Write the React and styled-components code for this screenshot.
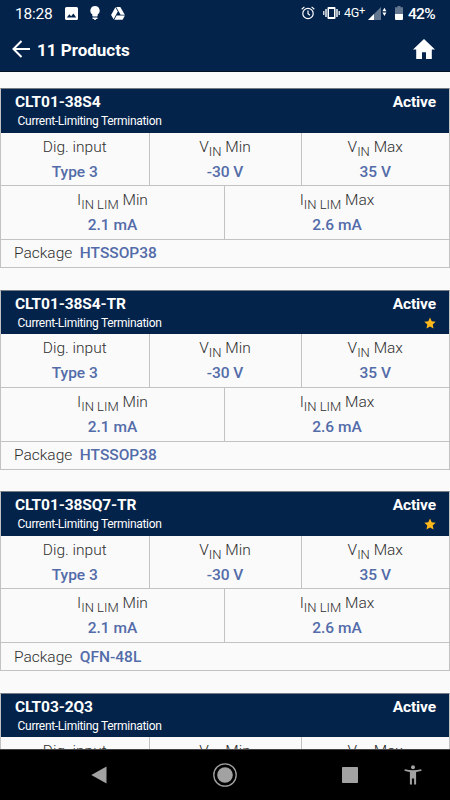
import React from 'react';
import styled, { createGlobalStyle } from 'styled-components';

const colors = {
	navy: '#03234b',
	page: '#fafafa',
	line: '#c2c2c2',
	label: '#2e2e2e',
	value: '#536ca9',
	star: '#ffb81c',
	nav_icon: '#a2a2a2',
};

const products = [
	{ name: 'CLT01-38S4', pkg: 'HTSSOP38', starred: false },
	{ name: 'CLT01-38S4-TR', pkg: 'HTSSOP38', starred: true },
	{ name: 'CLT01-38SQ7-TR', pkg: 'QFN-48L', starred: true },
	{ name: 'CLT03-2Q3', pkg: 'HTSSOP38', starred: false },
];

const StatusIcons = () => (
	<>
		<StatusIcon $left={13} width="13" height="13" viewBox="0 0 13 13">
			<path
				fillRule="evenodd"
				d="M1.5 0h10Q13 0 13 1.5v10q0 1.5-1.5 1.5h-10Q0 13 0 11.5v-10Q0 0 1.5 0ZM1.8 10.5h9.4L8.4 6.4 6.1 9.3 4.4 7.3Z"
			/>
		</StatusIcon>
		<StatusIcon $left={12} width="10" height="14" viewBox="0 0 10 14">
			<path d="M5 0a4.7 4.7 0 0 1 2.7 8.5v1.3q0 .8-.8.8H3.1q-.8 0-.8-.8V8.5A4.7 4.7 0 0 1 5 0ZM2.5 11.6h5v.8q0 .5-.5.5H6l-.4 1H4.4l-.4-1H3q-.5 0-.5-.5Z" />
		</StatusIcon>
		<StatusIcon $left={11} width="14" height="13" viewBox="0 0 14 13">
			<path d="M4.4.3 6.8 4.5 2.6 12.2.1 7.9Z" />
			<path d="M5.2 0h4.1L13.8 7.7H9.6Z" />
			<path d="M5.6 8.6h8.3L11.6 12.8H3.3Z" />
		</StatusIcon>
	</>
);

const ProductCard = ({ product }) => (
	<Card>
		<CardHead>
			<HeadLine>
				<span>{product.name}</span>
				<span>Active</span>
			</HeadLine>
			<HeadSub>
				<span>Current-Limiting Termination</span>
				{product.starred && (
					<svg width="12" height="12" viewBox="0 0 24 24" fill={colors.star}>
						<path d="m12 1 3.4 7.4 8 .9-6 5.5 1.7 8-7.1-4-7.1 4 1.7-8-6-5.5 8-.9Z" />
					</svg>
				)}
			</HeadSub>
		</CardHead>
		<CellRow $columns="147.500px 152px 1fr">
			<Cell>
				<Label>Dig. input</Label>
				<Value>Type 3</Value>
			</Cell>
			<Cell>
				<Label>
					V<Sub>IN</Sub> Min
				</Label>
				<Value>-30 V</Value>
			</Cell>
			<Cell>
				<Label>
					V<Sub>IN</Sub> Max
				</Label>
				<Value>35 V</Value>
			</Cell>
		</CellRow>
		<CellRow $columns="223px 1fr">
			<Cell>
				<Label>
					I<Sub>IN LIM</Sub> Min
				</Label>
				<Value>2.1 mA</Value>
			</Cell>
			<Cell>
				<Label>
					I<Sub>IN LIM</Sub> Max
				</Label>
				<Value>2.6 mA</Value>
			</Cell>
		</CellRow>
		<PackageRow>
			<Label>Package</Label>
			<Value>{product.pkg}</Value>
		</PackageRow>
	</Card>
);

const App = () => (
	<Screen>
		<GlobalStyle />
		<StatusBar>
			<Clock>18:28</Clock>
			<StatusIcons />
			<Spacer />
			<StatusIcon width="14" height="14" viewBox="0 0 14 14">
				<g fill="none" stroke="#fff" strokeWidth="1.2">
					<circle cx="7" cy="7.5" r="5.2" />
					<path d="M7 4.5v3.2L9 9.2M.7 3.2 3.4.9M13.3 3.2 10.6.9" />
				</g>
			</StatusIcon>
			<StatusIcon $left={8} width="17" height="14" viewBox="0 0 17 14">
				<path
					fillRule="evenodd"
					d="M5.5 1h6q1 0 1 1v10q0 1-1 1h-6q-1 0-1-1V2q0-1 1-1ZM6 3v8h5V3ZM2.3 3h1.4v8H2.3ZM13.3 3h1.4v8h-1.4ZM.2 5h1.2v4H.2ZM15.6 5h1.2v4h-1.2Z"
				/>
			</StatusIcon>
			<Network>
				4G<sup>+</sup>
			</Network>
			<StatusIcon $left={3} width="19" height="13" viewBox="0 0 19 13">
				<path opacity=".38" d="M0 13 13 0v13Z" />
				<path d="M0 13 6 7v6Z" />
				<path d="M14.4 4.2 16.4.8l2 3.4ZM14.4 5.6h4l-2 3.4Z" />
			</StatusIcon>
			<StatusIcon $left={8} width="8" height="14" viewBox="0 0 8 14">
				<path opacity=".38" d="M2.5 0h3v1.2H8V8H0V1.2h2.5Z" />
				<path d="M0 8h8v5q0 1-1 1H1q-1 0-1-1Z" />
			</StatusIcon>
			<Battery>42%</Battery>
		</StatusBar>
		<AppBar>
			<svg width="19" height="18" viewBox="0 0 19 18" fill="none" stroke="#fff" strokeWidth="2">
				<path d="M18 9H2M9.5 1 1.5 9l8 8" />
			</svg>
			<Title>11 Products</Title>
			<svg width="22" height="20" viewBox="0 0 22 20" fill="#fff">
				<path d="M11 0 22 10.4h-3.2V20H13v-6.8H9V20H3.2v-9.6H0Z" />
			</svg>
		</AppBar>
		<List>
			{products.map((product) => (
				<ProductCard key={product.name} product={product} />
			))}
		</List>
		<NavBar>
			<NavIcon width="16" height="18" viewBox="0 0 16 18">
				<path d="M15.5.4v17.2L.3 9Z" />
			</NavIcon>
			<NavIcon $left={106} width="24" height="24" viewBox="0 0 24 24">
				<circle cx="12" cy="12" r="11.2" fill="none" stroke={colors.nav_icon} strokeWidth="1.3" />
				<circle cx="12" cy="12" r="7.8" />
			</NavIcon>
			<NavIcon $left={105} width="16" height="16" viewBox="0 0 16 16">
				<rect width="16" height="16" rx=".7" />
			</NavIcon>
			<NavIcon $left={46} width="18" height="20" viewBox="0 0 18 20">
				<circle cx="9" cy="2.2" r="2" />
				<path d="M.8 4.2Q9 6.5 17.2 4.2l.4 1.6q-3 .9-5.500 1.100V19.500h-2v-6H7.900v6h-2V6.900Q3.400 6.700.4 5.800Z" />
			</NavIcon>
		</NavBar>
	</Screen>
);
export default App;

const GlobalStyle = createGlobalStyle`
	* {
		box-sizing: border-box;
	}
	body {
		margin: 0;
		font-family: Roboto, 'Liberation Sans', sans-serif;
	}
	svg {
		flex: none;
		display: block;
	}
`;

const Screen = styled.div`
	display: flex;
	flex-direction: column;
	width: 450px;
	height: 800px;
	overflow: hidden;
	background: ${colors.page};
`;

const StatusBar = styled.div`
	display: flex;
	align-items: center;
	flex: none;
	height: 27px;
	padding: 0 15px 1px;
	background: ${colors.navy};
	color: #fff;
`;

const Clock = styled.div`
	width: 37px;
	font-size: 15.5px;
	letter-spacing: -0.25px;
	line-height: 18px;
	padding-top: 2px;
	white-space: nowrap;
`;

const StatusIcon = styled.svg`
	margin-left: ${({ $left }) => $left || 0}px;
	fill: #fff;
`;

const Spacer = styled.div`
	flex: 1;
`;

const Network = styled.div`
	width: 21px;
	margin-left: 4px;
	font-size: 12.5px;
	letter-spacing: -0.3px;
	line-height: 14px;
	white-space: nowrap;

	sup {
		font-size: 11px;
		line-height: 0;
		vertical-align: 3px;
	}
`;

const Battery = styled.div`
	width: 27px;
	margin-left: 5px;
	font-size: 15.5px;
	font-weight: 500;
	letter-spacing: -0.7px;
	line-height: 18px;
	padding-top: 2px;
	white-space: nowrap;
`;

const AppBar = styled.div`
	display: flex;
	align-items: center;
	flex: none;
	height: 45px;
	padding: 0 15px 0 12px;
	border-bottom: 1px solid #021022;
	background: ${colors.navy};
	color: #fff;
`;

const Title = styled.div`
	flex: 1;
	margin-left: 6px;
	font-size: 17px;
	font-weight: 700;
	line-height: 24px;
	padding-top: 2px;
`;

const List = styled.div`
	flex: 1;
	min-height: 0;
	display: flex;
	flex-direction: column;
	gap: 21.6px;
	padding-top: 16px;
	overflow-y: auto;
	scrollbar-width: none;
`;

const Card = styled.div`
	flex: none;
	height: 180px;
	border: 1px solid ${colors.line};
	border-top-color: #777b83;
`;

const CardHead = styled.div`
	height: 43.7px;
	padding: 4px 13px 0 14px;
	background: ${colors.navy};
	color: #fff;
`;

const HeadLine = styled.div`
	display: flex;
	justify-content: space-between;
	font-size: 15.5px;
	font-weight: 700;
	letter-spacing: -0.1px;
	line-height: 19px;
`;

const HeadSub = styled.div`
	display: flex;
	justify-content: space-between;
	align-items: center;
	padding-left: 2.6px;
	font-size: 12px;
	letter-spacing: -0.3px;
	line-height: 18px;
`;

const CellRow = styled.div`
	display: grid;
	grid-template-columns: ${({ $columns }) => $columns};
	height: 53.3px;
	border-bottom: 1px solid ${colors.line};

	& + & {
		height: 54px;
	}
`;

const Cell = styled.div`
	padding-top: 2px;
	text-align: center;

	& + & {
		border-left: 1px solid ${colors.line};
	}
`;

const Label = styled.div`
	font-size: 15.5px;
	font-weight: 300;
	line-height: 24px;
	color: ${colors.label};
`;

const Sub = styled.sub`
	font-size: 13px;
	line-height: 0;
	vertical-align: -4px;
`;

const Value = styled.div`
	font-size: 15.5px;
	font-weight: 500;
	line-height: 26px;
	color: ${colors.value};
`;

const PackageRow = styled.div`
	display: flex;
	gap: 7.5px;
	align-items: center;
	height: 27px;
	padding-left: 13px;
`;

const NavBar = styled.div`
	display: flex;
	align-items: center;
	flex: none;
	height: 51px;
	padding-left: 91px;
	border-top: 1px solid #444;
	background: #000;
`;

const NavIcon = styled.svg`
	margin-left: ${({ $left }) => $left || 0}px;
	fill: ${colors.nav_icon};
`;
